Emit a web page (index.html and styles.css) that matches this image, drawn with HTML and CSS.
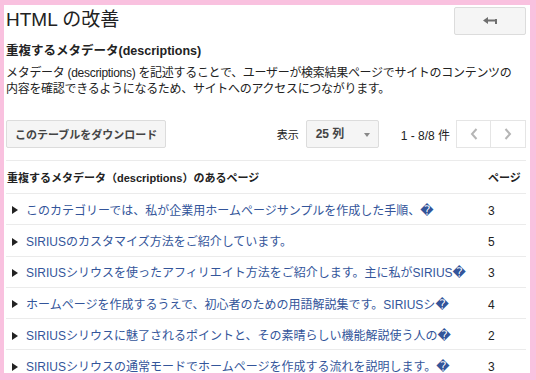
FILE: index.html
```html
<!DOCTYPE html>
<html lang="ja">
    <head>
        <meta charset="UTF-8">
        <title>HTML の改善</title>
        <link rel="stylesheet" href="styles.css">
    </head>
    <body>
        <div class="page">

            <div class="top">
                <h1 class="title">HTML の改善</h1>
                <button type="button" class="back_button">
                    <svg width="14" height="8" viewBox="0 0 14 8">
                        <path d="M0 3.5 L5 0 L5 2.5 L12 2.5 L12 2 L14 2 L14 7 L12 7 L12 4.5 L5 4.5 L5 7 Z" fill="#6f6f6f"/>
                    </svg>
                </button>
            </div>

            <h2 class="section_title">重複するメタデータ(descriptions)</h2>
            <p class="intro">メタデータ (descriptions) を記述することで、ユーザーが検索結果ページでサイトのコンテンツの<br>内容を確認できるようになるため、サイトへのアクセスにつながります。</p>

            <div class="toolbar">
                <button type="button" class="btn">このテーブルをダウンロード</button>
                <div class="spacer"></div>
                <span class="show_label">表示</span>
                <div class="select">25 列<span class="select_arrow"></span></div>
                <span class="count">1 - 8/8 件</span>
                <div class="pager">
                    <button type="button" class="pager_btn">
                        <svg width="8" height="12" viewBox="0 0 8 12"><path d="M6.5 1 L2 6 L6.5 11" fill="none" stroke="#b5b5b5" stroke-width="2"/></svg>
                    </button>
                    <button type="button" class="pager_btn">
                        <svg width="8" height="12" viewBox="0 0 8 12"><path d="M1.5 1 L6 6 L1.5 11" fill="none" stroke="#b5b5b5" stroke-width="2"/></svg>
                    </button>
                </div>
            </div>

            <table class="pages">
                <thead>
                    <tr>
                        <th>重複するメタデータ（descriptions）のあるページ</th>
                        <th class="num">ページ</th>
                    </tr>
                </thead>
                <tbody>
                    <tr>
                        <td><span class="toggle"></span><a href="#">このカテゴリーでは、私が企業用ホームページサンプルを作成した手順、<span class="rep">&#xFFFD;</span></a></td>
                        <td class="num">3</td>
                    </tr>
                    <tr>
                        <td><span class="toggle"></span><a href="#">SIRIUSのカスタマイズ方法をご紹介しています。</a></td>
                        <td class="num">5</td>
                    </tr>
                    <tr>
                        <td><span class="toggle"></span><a href="#">SIRIUSシリウスを使ったアフィリエイト方法をご紹介します。主に私がSIRIUS<span class="rep">&#xFFFD;</span></a></td>
                        <td class="num">3</td>
                    </tr>
                    <tr>
                        <td><span class="toggle"></span><a href="#">ホームページを作成するうえで、初心者のための用語解説集です。SIRIUSシ<span class="rep">&#xFFFD;</span></a></td>
                        <td class="num">4</td>
                    </tr>
                    <tr>
                        <td><span class="toggle"></span><a href="#">SIRIUSシリウスに魅了されるポイントと、その素晴らしい機能解説使う人の<span class="rep">&#xFFFD;</span></a></td>
                        <td class="num">2</td>
                    </tr>
                    <tr>
                        <td><span class="toggle"></span><a href="#">SIRIUSシリウスの通常モードでホームページを作成する流れを説明します。<span class="rep">&#xFFFD;</span></a></td>
                        <td class="num">3</td>
                    </tr>
                </tbody>
            </table>

        </div>
    </body>
</html>
```

FILE: styles.css
```css
* {
    margin: 0;
    padding: 0;
    box-sizing: border-box;
}
html {
    background-color: #f9c1df;
}
body {
    font-family: "Liberation Sans", "Noto Sans CJK JP", sans-serif;
    font-size: 12px;
    color: #222;
    padding: 5px 6px 7px 4px;
}
.page {
    background-color: #fff;
    height: 368px;
    padding: 2px 4px 0 2px;
    overflow: hidden;
}
.top {
    display: flex;
    justify-content: space-between;
    align-items: flex-start;
}
.title {
    font-size: 19px;
    font-weight: normal;
    line-height: 23px;
    margin-top: 1px;
    color: #222;
}
.back_button {
    width: 72px;
    height: 28px;
    background-color: #f5f5f5;
    border: 1px solid #dcdcdc;
    border-radius: 2px;
    display: flex;
    align-items: center;
    justify-content: center;
}
.section_title {
    font-size: 12.5px;
    font-weight: bold;
    line-height: 16px;
    margin-top: 8px;
}
.intro {
    line-height: 16px;
    margin-top: 6px;
    letter-spacing: -0.3px;
    white-space: nowrap;
}
.toolbar {
    display: flex;
    align-items: center;
    margin-top: 23px;
    height: 28px;
}
.btn {
    font-family: inherit;
    font-size: 11px;
    font-weight: bold;
    color: #444;
    height: 28px;
    padding: 0 8px;
    background-color: #f5f5f5;
    border: 1px solid #dcdcdc;
    border-radius: 2px;
}
.spacer {
    flex: 1;
}
.show_label {
    font-size: 11px;
    margin-right: 7px;
}
.select {
    position: relative;
    width: 73px;
    height: 28px;
    line-height: 26px;
    padding-left: 9px;
    font-weight: bold;
    color: #444;
    background-color: #f5f5f5;
    border: 1px solid #dcdcdc;
    border-radius: 2px;
}
.select_arrow {
    position: absolute;
    right: 8px;
    top: 12px;
    border-top: 4px solid #888;
    border-left: 3px solid transparent;
    border-right: 3px solid transparent;
}
.count {
    margin-left: 22px;
    margin-right: 6px;
}
.pager {
    display: flex;
}
.pager_btn {
    width: 35px;
    height: 28px;
    background-color: #fff;
    border: 1px solid #e5e5e5;
    display: flex;
    align-items: center;
    justify-content: center;
}
.pager_btn + .pager_btn {
    border-left: none;
}
.pages {
    width: 100%;
    margin-top: 12px;
    border-collapse: collapse;
}
.pages th {
    font-size: 11px;
    font-weight: bold;
    text-align: left;
    height: 33px;
    padding-left: 1px;
    border-top: 1px solid #ebebeb;
    border-bottom: 1px solid #ebebeb;
    white-space: nowrap;
}
.pages td {
    height: 31.3px;
    padding-top: 3px;
    line-height: 12px;
    border-bottom: 1px solid #ebebeb;
    white-space: nowrap;
}
.pages .num {
    width: 45px;
    padding-left: 7px;
}
.toggle {
    display: inline-block;
    vertical-align: middle;
    margin: 0 8px 2px 6px;
    border-left: 6px solid #222;
    border-top: 4px solid transparent;
    border-bottom: 4px solid transparent;
}
.pages a {
    color: #33559a;
    text-decoration: none;
}
.rep {
    font-family: "DejaVu Sans", sans-serif;
    font-size: 13px;
    line-height: 12px;
}
```
